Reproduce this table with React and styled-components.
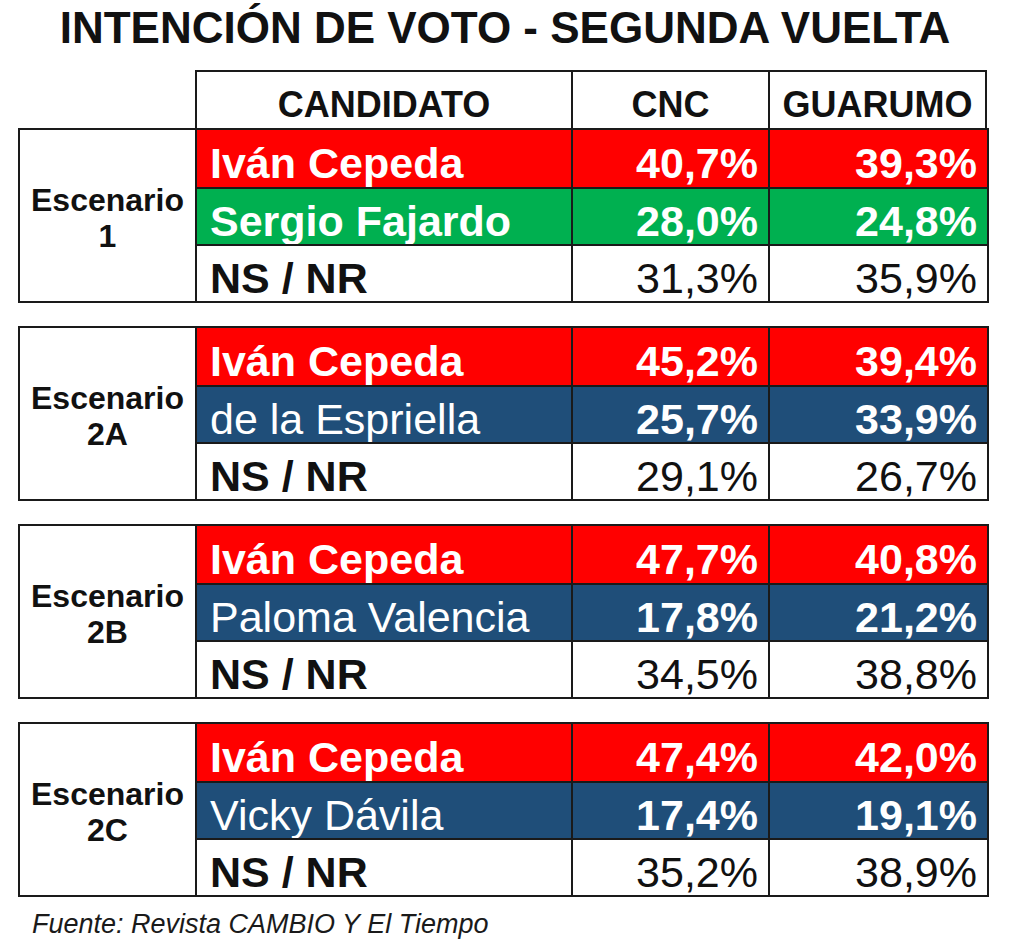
import styled, { createGlobalStyle } from 'styled-components';

const GlobalStyle = createGlobalStyle`
  html, body {
    margin: 0;
    padding: 0;
    background-color: #ffffff;
  }
  body {
    font-family: 'Liberation Sans', Arial, sans-serif;
  }
`;

const COLUMNS = '175px 376px 197px 219px';

const tones = {
  red: '#ff0000',
  green: '#00b050',
  blue: '#1f4e79',
  none: '#ffffff',
};

const scenarios = [
  {
    id: '1',
    rows: [
      { name: 'Iván Cepeda', cnc: '40,7%', guarumo: '39,3%', tone: 'red', bold: true },
      { name: 'Sergio Fajardo', cnc: '28,0%', guarumo: '24,8%', tone: 'green', bold: true },
      { name: 'NS / NR', cnc: '31,3%', guarumo: '35,9%', tone: 'none', bold: true },
    ],
  },
  {
    id: '2A',
    rows: [
      { name: 'Iván Cepeda', cnc: '45,2%', guarumo: '39,4%', tone: 'red', bold: true },
      { name: 'de la Espriella', cnc: '25,7%', guarumo: '33,9%', tone: 'blue', bold: false },
      { name: 'NS / NR', cnc: '29,1%', guarumo: '26,7%', tone: 'none', bold: true },
    ],
  },
  {
    id: '2B',
    rows: [
      { name: 'Iván Cepeda', cnc: '47,7%', guarumo: '40,8%', tone: 'red', bold: true },
      { name: 'Paloma Valencia', cnc: '17,8%', guarumo: '21,2%', tone: 'blue', bold: false },
      { name: 'NS / NR', cnc: '34,5%', guarumo: '38,8%', tone: 'none', bold: true },
    ],
  },
  {
    id: '2C',
    rows: [
      { name: 'Iván Cepeda', cnc: '47,4%', guarumo: '42,0%', tone: 'red', bold: true },
      { name: 'Vicky Dávila', cnc: '17,4%', guarumo: '19,1%', tone: 'blue', bold: false },
      { name: 'NS / NR', cnc: '35,2%', guarumo: '38,9%', tone: 'none', bold: true },
    ],
  },
];

const Page = styled.main`
  width: 1024px;
  padding: 2px 0 0 18px;
  box-sizing: border-box;
  color: #111111;
`;

const Title = styled.h1`
  margin: 0 0 16px;
  padding-right: 32px;
  font-size: 44px;
  line-height: 52px;
  font-weight: 700;
  text-align: center;
`;

const Blocks = styled.div`
  display: flex;
  flex-direction: column;
  gap: 23px;
`;

const HeaderRow = styled.div`
  display: grid;
  grid-template-columns: ${COLUMNS};
  padding-left: 2px;
  margin-bottom: -23px;
`;

const HeaderCell = styled.div`
  height: 58px;
  display: flex;
  align-items: center;
  justify-content: center;
  padding-top: 10px;
  box-sizing: border-box;
  border-top: 2px solid #1a1a1a;
  border-left: 2px solid #1a1a1a;
  font-size: 36px;
  line-height: 1;
  font-weight: 700;

  &:last-child {
    border-right: 2px solid #1a1a1a;
  }
`;

const Blank = styled.div``;

const Block = styled.section`
  display: grid;
  grid-template-columns: ${COLUMNS};
  grid-auto-rows: 57px;
  border: 2px solid #1a1a1a;
  width: max-content;
`;

const Label = styled.div`
  grid-row: span 3;
  display: flex;
  flex-direction: column;
  align-items: center;
  justify-content: center;
  padding-top: 4px;
  font-size: 32px;
  line-height: 36px;
  font-weight: 700;
  text-align: center;
`;

const Cell = styled.div`
  display: flex;
  align-items: center;
  justify-content: ${(p) => (p.$number ? 'flex-end' : 'flex-start')};
  padding: 10px ${(p) => (p.$number ? '10px' : '0')} 0 ${(p) => (p.$number ? '0' : '13px')};
  border-left: 2px solid #1a1a1a;
  border-top: ${(p) => (p.$first ? 'none' : '2px solid #1a1a1a')};
  background-color: ${(p) => tones[p.$tone]};
  color: ${(p) => (p.$tone === 'none' ? '#111111' : '#ffffff')};
  font-size: 43px;
  line-height: 1;
  font-weight: ${(p) => (p.$bold ? 700 : 400)};
  white-space: nowrap;
`;

const Source = styled.p`
  margin: 12px 0 0 14px;
  font-size: 27px;
  font-style: italic;
  color: #1a1a1a;
`;

function Scenario({ scenario }) {
  return (
    <Block>
      <Label>
        <span>Escenario</span>
        <span>{scenario.id}</span>
      </Label>
      {scenario.rows.map((row, i) => (
        <>
          <Cell key={`${row.name}-n`} $tone={row.tone} $bold={row.bold} $first={i === 0}>
            {row.name}
          </Cell>
          <Cell key={`${row.name}-c`} $tone={row.tone} $bold={row.tone !== 'none'} $first={i === 0} $number>
            {row.cnc}
          </Cell>
          <Cell key={`${row.name}-g`} $tone={row.tone} $bold={row.tone !== 'none'} $first={i === 0} $number>
            {row.guarumo}
          </Cell>
        </>
      ))}
    </Block>
  );
}

function App() {
  return (
    <>
      <GlobalStyle />
      <Page>
        <Title>INTENCIÓN DE VOTO - SEGUNDA VUELTA</Title>
        <Blocks>
          <HeaderRow>
            <Blank />
            <HeaderCell>CANDIDATO</HeaderCell>
            <HeaderCell>CNC</HeaderCell>
            <HeaderCell>GUARUMO</HeaderCell>
          </HeaderRow>
          {scenarios.map((s) => (
            <Scenario key={s.id} scenario={s} />
          ))}
        </Blocks>
        <Source>Fuente: Revista CAMBIO Y El Tiempo</Source>
      </Page>
    </>
  );
}

export default App;
